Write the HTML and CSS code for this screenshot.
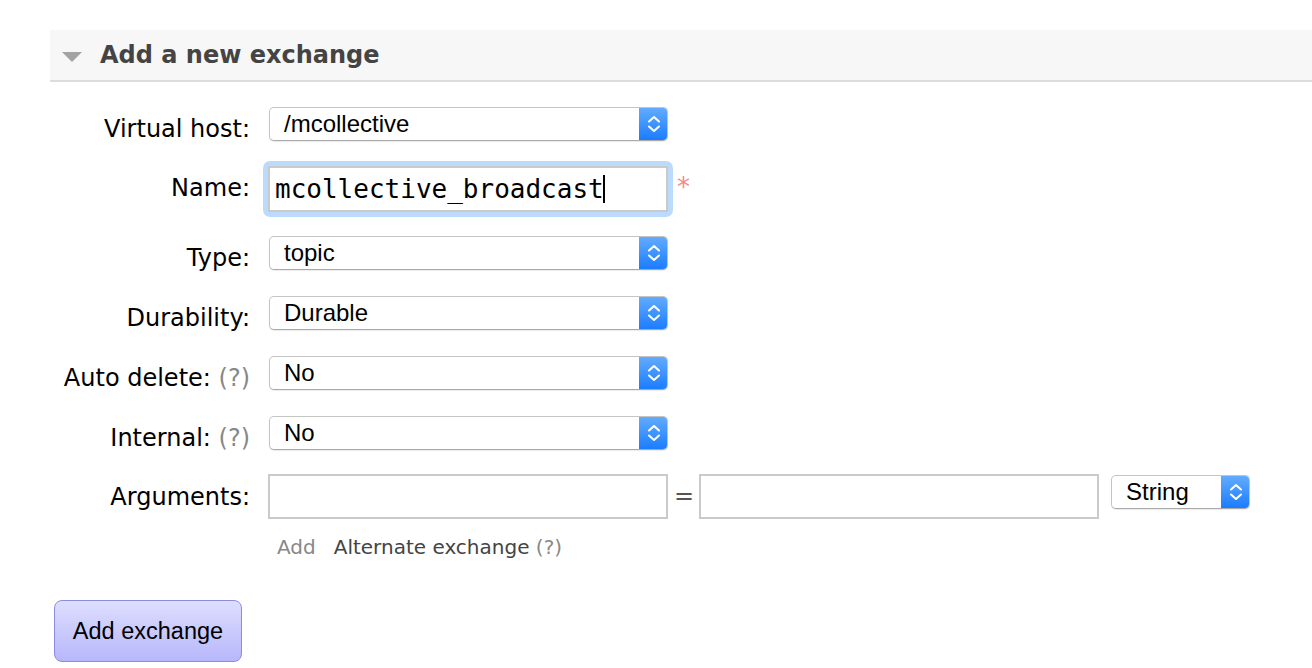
FILE: index.html
```html
<!DOCTYPE html>
<html>
<head>
<meta charset="utf-8">
<title>Add a new exchange</title>
<link rel="stylesheet" href="styles.css">
</head>
<body>
<div class="section">
  <div class="section-head">
    <span class="tri"></span>
    <h2 class="title">Add a new exchange</h2>
  </div>
  <div class="form">
    <div class="row row-vhost row-select">
      <div class="label">Virtual host:</div>
      <div class="select select-wide"><span class="sel-text">/mcollective</span><span class="sel-arrows"><svg width="14" height="20" viewBox="0 0 14 20"><path d="M2 7.5 L7 3 L12 7.5 M2 12.5 L7 17 L12 12.5" fill="none" stroke="#fff" stroke-width="2" stroke-linecap="round" stroke-linejoin="round"/></svg></span></div>
    </div>
    <div class="row row-name">
      <div class="label label-name">Name:</div>
      <div class="focus-ring"><div class="text-input text-input-focus"><span class="mono">mcollective_broadcast</span><span class="caret"></span></div></div>
      <span class="required">*</span>
    </div>
    <div class="row row-select">
      <div class="label">Type:</div>
      <div class="select select-wide"><span class="sel-text">topic</span><span class="sel-arrows"><svg width="14" height="20" viewBox="0 0 14 20"><path d="M2 7.5 L7 3 L12 7.5 M2 12.5 L7 17 L12 12.5" fill="none" stroke="#fff" stroke-width="2" stroke-linecap="round" stroke-linejoin="round"/></svg></span></div>
    </div>
    <div class="row row-select">
      <div class="label">Durability:</div>
      <div class="select select-wide"><span class="sel-text">Durable</span><span class="sel-arrows"><svg width="14" height="20" viewBox="0 0 14 20"><path d="M2 7.5 L7 3 L12 7.5 M2 12.5 L7 17 L12 12.5" fill="none" stroke="#fff" stroke-width="2" stroke-linecap="round" stroke-linejoin="round"/></svg></span></div>
    </div>
    <div class="row row-select">
      <div class="label">Auto delete: <span class="help">(?)</span></div>
      <div class="select select-wide"><span class="sel-text">No</span><span class="sel-arrows"><svg width="14" height="20" viewBox="0 0 14 20"><path d="M2 7.5 L7 3 L12 7.5 M2 12.5 L7 17 L12 12.5" fill="none" stroke="#fff" stroke-width="2" stroke-linecap="round" stroke-linejoin="round"/></svg></span></div>
    </div>
    <div class="row row-select row-internal">
      <div class="label">Internal: <span class="help">(?)</span></div>
      <div class="select select-wide"><span class="sel-text">No</span><span class="sel-arrows"><svg width="14" height="20" viewBox="0 0 14 20"><path d="M2 7.5 L7 3 L12 7.5 M2 12.5 L7 17 L12 12.5" fill="none" stroke="#fff" stroke-width="2" stroke-linecap="round" stroke-linejoin="round"/></svg></span></div>
    </div>
    <div class="row row-args">
      <div class="label label-args">Arguments:</div>
      <div class="text-input"></div>
      <span class="equals">=</span>
      <div class="text-input"></div>
      <div class="select select-small"><span class="sel-text">String</span><span class="sel-arrows"><svg width="14" height="20" viewBox="0 0 14 20"><path d="M2 7.5 L7 3 L12 7.5 M2 12.5 L7 17 L12 12.5" fill="none" stroke="#fff" stroke-width="2" stroke-linecap="round" stroke-linejoin="round"/></svg></span></div>
    </div>
    <div class="row row-add">
      <span class="add-link">Add</span>
      <span class="alt-link">Alternate exchange <span class="help">(?)</span></span>
    </div>
    <button class="btn">Add exchange</button>
  </div>
</div>
</body>
</html>
```

FILE: styles.css
```css
html, body {
  margin: 0;
  padding: 0;
  background: #fff;
}
body {
  font-family: "DejaVu Sans", Verdana, sans-serif;
  color: #000;
}
.section {
  margin-left: 50px;
  padding-top: 30px;
}
.section-head {
  height: 50px;
  background: #f7f7f7;
  border-bottom: 2px solid #dcdcdc;
  display: flex;
  align-items: center;
}
.tri {
  width: 0;
  height: 0;
  border-left: 10.5px solid transparent;
  border-right: 10.5px solid transparent;
  border-top: 10px solid #a3a3a3;
  margin-left: 12px;
  margin-top: 3px;
}
.title {
  margin: 0 0 0 18px;
  font-family: "DejaVu Sans", Verdana, sans-serif;
  font-weight: bold;
  font-size: 24px;
  color: #444;
  line-height: 28px;
}
.form {
  padding-top: 25px;
}
.row {
  display: flex;
  align-items: flex-start;
  height: 60px;
}
.row-vhost { height: 54px; }
.row-name { height: 75px; }
.row-internal { height: 58px; }
.row-args { height: 61px; }
.label {
  width: 200px;
  flex: none;
  text-align: right;
  margin-right: 19px;
  font-size: 24px;
  line-height: 28px;
  white-space: nowrap;
}
.row-select .label { margin-top: 8px; }
.label-name { margin-top: 13px; margin-right: 13px; }
.label-args { margin-top: 9px; margin-right: 18px; }
.help { color: #888; }
.select {
  box-sizing: border-box;
  height: 34px;
  border: 1px solid #c4c4c4;
  border-bottom-color: #a9a9a9;
  border-radius: 5px;
  background: #fff;
  display: flex;
  align-items: center;
  overflow: hidden;
  box-shadow: 0 1px 1px rgba(0,0,0,0.08);
}
.select-wide { width: 399px; }
.select-small { width: 139px; margin-left: 12px; margin-top: 1px; }
.sel-text {
  flex: 1;
  padding-left: 14px;
  font-family: "Liberation Sans", Arial, sans-serif;
  font-size: 24px;
  line-height: 28px;
  color: #000;
}
.sel-arrows {
  width: 29px;
  align-self: stretch;
  margin: -1px -1px -1px 0;
  background: linear-gradient(#64adff, #197bff);
  display: flex;
  align-items: center;
  justify-content: center;
}
.focus-ring {
  padding: 5px;
  background: #bcdafc;
  border-radius: 7px;
}
.text-input {
  box-sizing: border-box;
  width: 400px;
  height: 45px;
  border: 2px solid #cacaca;
  background: #fff;
  flex: none;
}
.text-input-focus {
  height: 46px;
  display: flex;
  align-items: center;
  padding-left: 5px;
}
.mono {
  font-family: "DejaVu Sans Mono", monospace;
  font-size: 26px;
  line-height: 30px;
  color: #000;
}
.caret {
  width: 2px;
  height: 28px;
  background: #000;
  margin-left: -1px;
}
.required {
  color: #f58a8a;
  font-size: 26px;
  line-height: 30px;
  margin-left: 4px;
  margin-top: 11px;
}
.equals {
  font-size: 24px;
  line-height: 28px;
  color: #555;
  margin: 8px 5px 0 6px;
}
.row-add {
  height: 24px;
  padding-left: 227px;
  font-size: 20px;
  line-height: 24px;
}
.add-link { color: #888; margin-right: 18px; }
.alt-link { color: #444; }
.btn {
  display: block;
  margin: 41px 0 0 4px;
  width: 188px;
  height: 62px;
  border: 1.5px solid #8b8be0;
  border-radius: 8px;
  background: linear-gradient(#dedeff, #b7b7fb);
  font-family: "Liberation Sans", Arial, sans-serif;
  font-size: 23.5px;
  color: #000;
  padding: 0 0 0 0;
}
```
